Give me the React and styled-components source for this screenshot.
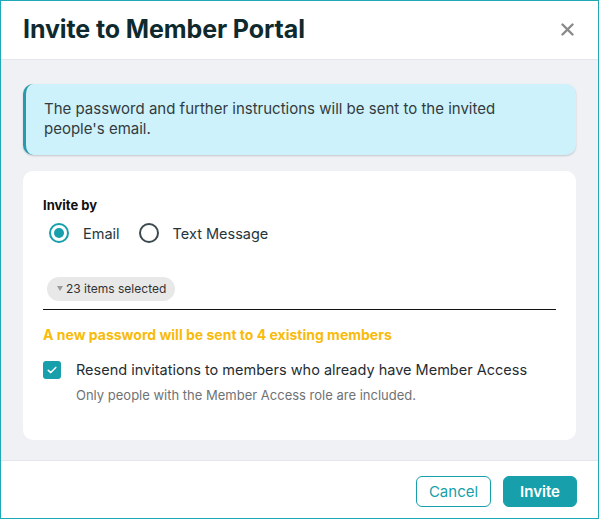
import React, { useState } from "react";
import styled, { createGlobalStyle } from "styled-components";

const GlobalStyle = createGlobalStyle`
  html, body {
    margin: 0;
    padding: 0;
    background: #ffffff;
  }
  body {
    font-family: Inter, "Noto Sans", "Liberation Sans", sans-serif;
    color: #1f2d33;
  }
  * {
    box-sizing: border-box;
  }
`;

const TEAL = "#179fab";

const Dialog = styled.div`
  width: 599px;
  height: 519px;
  border: 1px solid #1fa9b6;
  display: flex;
  flex-direction: column;
  background: #ffffff;
`;

const Header = styled.header`
  height: 59px;
  flex-shrink: 0;
  display: flex;
  align-items: center;
  justify-content: space-between;
  padding: 0 20px 2px 22px;
  border-bottom: 1px solid #e4e6eb;
`;

const Title = styled.h1`
  margin: 0;
  font-size: 25px;
  font-weight: 700;
  color: #0f2a2e;
  letter-spacing: -0.1px;
`;

const CloseButton = styled.button`
  border: none;
  background: transparent;
  padding: 0;
  width: 22px;
  height: 22px;
  display: flex;
  align-items: center;
  justify-content: center;
  cursor: pointer;
`;

const Body = styled.main`
  flex: 1;
  background: #f0f1f5;
  padding: 24px 22px 20px 22px;
  display: flex;
  flex-direction: column;
  gap: 16px;
`;

const Alert = styled.div`
  background: #cef2fb;
  border-left: 3px solid #2a98ad;
  border-radius: 10px;
  padding: 15px 20px 16px 18px;
  font-size: 15px;
  line-height: 20px;
  color: #333b40;
  box-shadow: 0 1px 2px rgba(0, 0, 0, 0.18);
`;

const Card = styled.section`
  flex: 1;
  background: #ffffff;
  border-radius: 10px;
  padding: 26px 20px 20px 20px;
  display: flex;
  flex-direction: column;
`;

const Label = styled.div`
  font-size: 13px;
  font-weight: 700;
  color: #111;
  line-height: 16px;
`;

const RadioRow = styled.div`
  display: flex;
  align-items: center;
  gap: 19px;
  margin-top: 10px;
  padding-left: 6px;
`;

const RadioOption = styled.label`
  display: flex;
  align-items: center;
  gap: 14px;
  font-size: 14.5px;
  color: #24363c;
  cursor: pointer;
`;

const RadioCircle = styled.span`
  width: 20px;
  height: 20px;
  border-radius: 50%;
  border: 2px solid ${(p) => (p.$checked ? TEAL : "#3b4a4f")};
  display: flex;
  align-items: center;
  justify-content: center;

  &::after {
    content: "";
    width: 10px;
    height: 10px;
    border-radius: 50%;
    background: ${(p) => (p.$checked ? TEAL : "transparent")};
  }
`;

const SelectField = styled.div`
  margin-top: 32px;
  border-bottom: 1px solid #111;
  padding: 0 0 8px 4px;
`;

const Chip = styled.span`
  display: inline-flex;
  align-items: center;
  gap: 3px;
  height: 24px;
  padding: 0 9px 0 10px;
  border-radius: 12px;
  background: #e8e8e8;
  font-size: 12px;
  color: #333;
`;

const Caret = styled.span`
  width: 0;
  height: 0;
  border-left: 3.5px solid transparent;
  border-right: 3.5px solid transparent;
  border-top: 5px solid #9a9a9a;
`;

const Warning = styled.div`
  margin-top: 16px;
  font-size: 14px;
  font-weight: 700;
  color: #f8bb0c;
  line-height: 18px;
`;

const CheckRow = styled.label`
  display: flex;
  align-items: center;
  gap: 15px;
  margin-top: 17px;
  font-size: 14.5px;
  color: #1f2d33;
  cursor: pointer;
`;

const CheckBox = styled.span`
  width: 18px;
  height: 18px;
  border-radius: 3px;
  background: ${TEAL};
  display: flex;
  align-items: center;
  justify-content: center;
`;

const Hint = styled.div`
  margin-top: 8px;
  padding-left: 33px;
  font-size: 13px;
  color: #6f7275;
`;

const Footer = styled.footer`
  height: 58px;
  flex-shrink: 0;
  border-top: 1px solid #e4e6eb;
  display: flex;
  justify-content: flex-end;
  align-items: flex-start;
  gap: 12px;
  padding: 15px 21px 0 0;
`;

const Button = styled.button`
  height: 31px;
  width: ${(p) => p.$width}px;
  padding: 0;
  border-radius: 6px;
  font-family: inherit;
  font-size: 15px;
  cursor: pointer;
  border: 1px solid ${TEAL};
  background: ${(p) => (p.$primary ? TEAL : "#ffffff")};
  color: ${(p) => (p.$primary ? "#ffffff" : TEAL)};
  font-weight: ${(p) => (p.$primary ? 600 : 400)};
`;

export default function App() {
  const [method, setMethod] = useState("email");

  return (
    <>
      <GlobalStyle />
      <Dialog>
        <Header>
          <Title>Invite to Member Portal</Title>
          <CloseButton aria-label="Close">
            <svg width="13" height="13" viewBox="0 0 13 13">
              <path
                d="M1.5 1.5 L11.5 11.5 M11.5 1.5 L1.5 11.5"
                stroke="#8a8a8a"
                strokeWidth="2.4"
                strokeLinecap="round"
              />
            </svg>
          </CloseButton>
        </Header>
        <Body>
          <Alert>
            The password and further instructions will be sent to the invited
            people's email.
          </Alert>
          <Card>
            <Label>Invite by</Label>
            <RadioRow>
              <RadioOption onClick={() => setMethod("email")}>
                <RadioCircle $checked={method === "email"} />
                Email
              </RadioOption>
              <RadioOption onClick={() => setMethod("text")}>
                <RadioCircle $checked={method === "text"} />
                Text Message
              </RadioOption>
            </RadioRow>
            <SelectField>
              <Chip>
                <Caret />
                23 items selected
              </Chip>
            </SelectField>
            <Warning>A new password will be sent to 4 existing members</Warning>
            <CheckRow>
              <CheckBox>
                <svg width="10" height="8" viewBox="0 0 10 8">
                  <path
                    d="M1.2 4.2 L3.8 6.6 L8.8 1.4"
                    stroke="#ffffff"
                    strokeWidth="1.5"
                    fill="none"
                    strokeLinecap="round"
                    strokeLinejoin="round"
                  />
                </svg>
              </CheckBox>
              Resend invitations to members who already have Member Access
            </CheckRow>
            <Hint>Only people with the Member Access role are included.</Hint>
          </Card>
        </Body>
        <Footer>
          <Button $width={75}>Cancel</Button>
          <Button $primary $width={74}>
            Invite
          </Button>
        </Footer>
      </Dialog>
    </>
  );
}
